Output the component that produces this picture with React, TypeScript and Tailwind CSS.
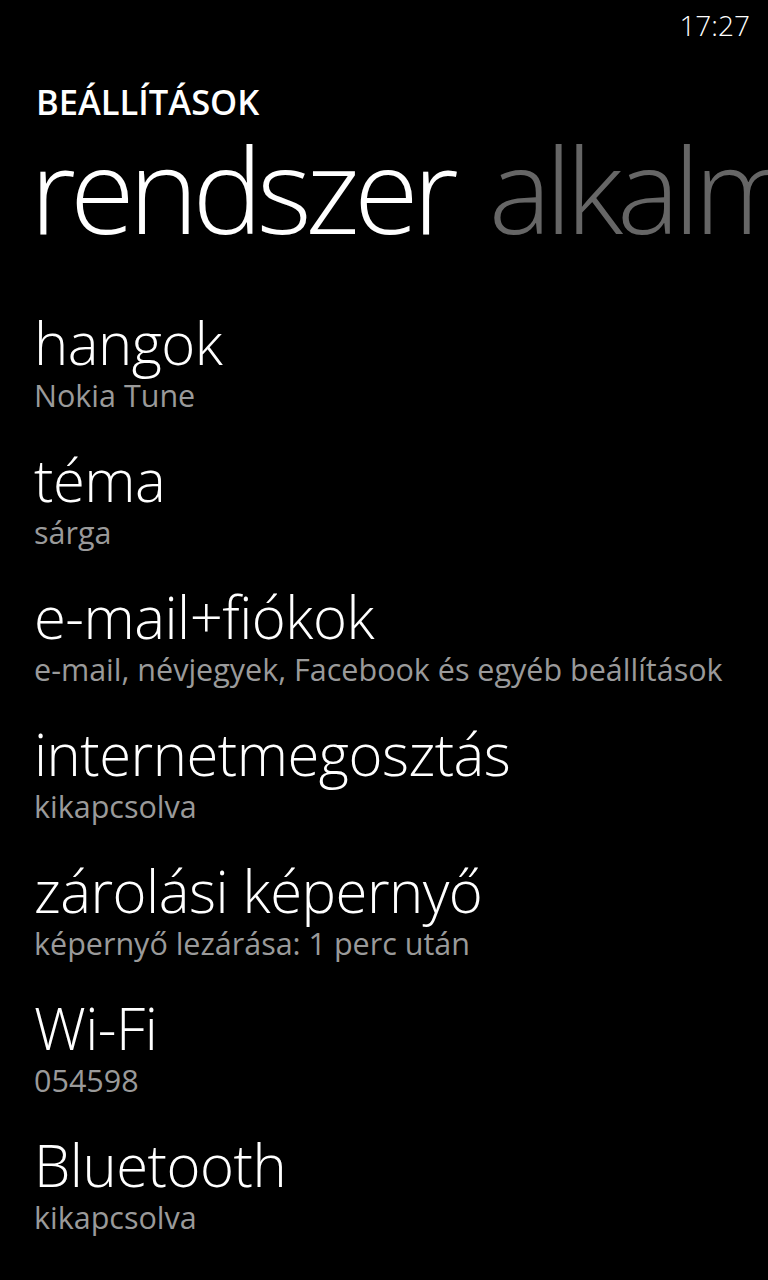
import React from 'react';

interface SettingItem {
  title: string;
  subtitle: string;
}

const items: SettingItem[] = [
  { title: 'hangok', subtitle: 'Nokia Tune' },
  { title: 'téma', subtitle: 'sárga' },
  { title: 'e-mail+fiókok', subtitle: 'e-mail, névjegyek, Facebook és egyéb beállítások' },
  { title: 'internetmegosztás', subtitle: 'kikapcsolva' },
  { title: 'zárolási képernyő', subtitle: 'képernyő lezárása: 1 perc után' },
  { title: 'Wi-Fi', subtitle: '054598' },
  { title: 'Bluetooth', subtitle: 'kikapcsolva' },
];

const App: React.FC = () => {
  return (
    <div className="min-h-[1280px] w-[768px] overflow-hidden bg-black text-white font-['Open_Sans',sans-serif]">
      {/* status bar */}
      <div className="flex justify-end pt-[9px] pr-[18px]">
        <span className="text-[28px] leading-[32px] font-light">17:27</span>
      </div>

      {/* pivot header */}
      <div className="pl-[36px] mt-[42px]">
        <h2 className="text-[34.5px] leading-[37px] font-semibold">BEÁLLÍTÁSOK</h2>
      </div>
      <div className="flex gap-[36px] whitespace-nowrap pl-[30px] mt-[9px]">
        <span className="text-[118px] leading-[120px] font-light tracking-[-6px]">rendszer</span>
        <span className="text-[118px] leading-[120px] font-light tracking-[-6px] text-[#666666]">alkalmazások</span>
      </div>

      {/* settings list */}
      <ul className="mt-[65px] flex flex-col gap-[38px] pl-[34px]">
        {items.map(item => (
          <li key={item.title + item.subtitle} className="flex flex-col">
            <span className="text-[58px] leading-[58px] font-light tracking-[-0.5px] whitespace-nowrap">
              {item.title}
            </span>
            <span className="mt-[5px] text-[30.5px] leading-[36px] text-[#9a9a9a] whitespace-nowrap">
              {item.subtitle}
            </span>
          </li>
        ))}
      </ul>
    </div>
  );
};

export default App;
